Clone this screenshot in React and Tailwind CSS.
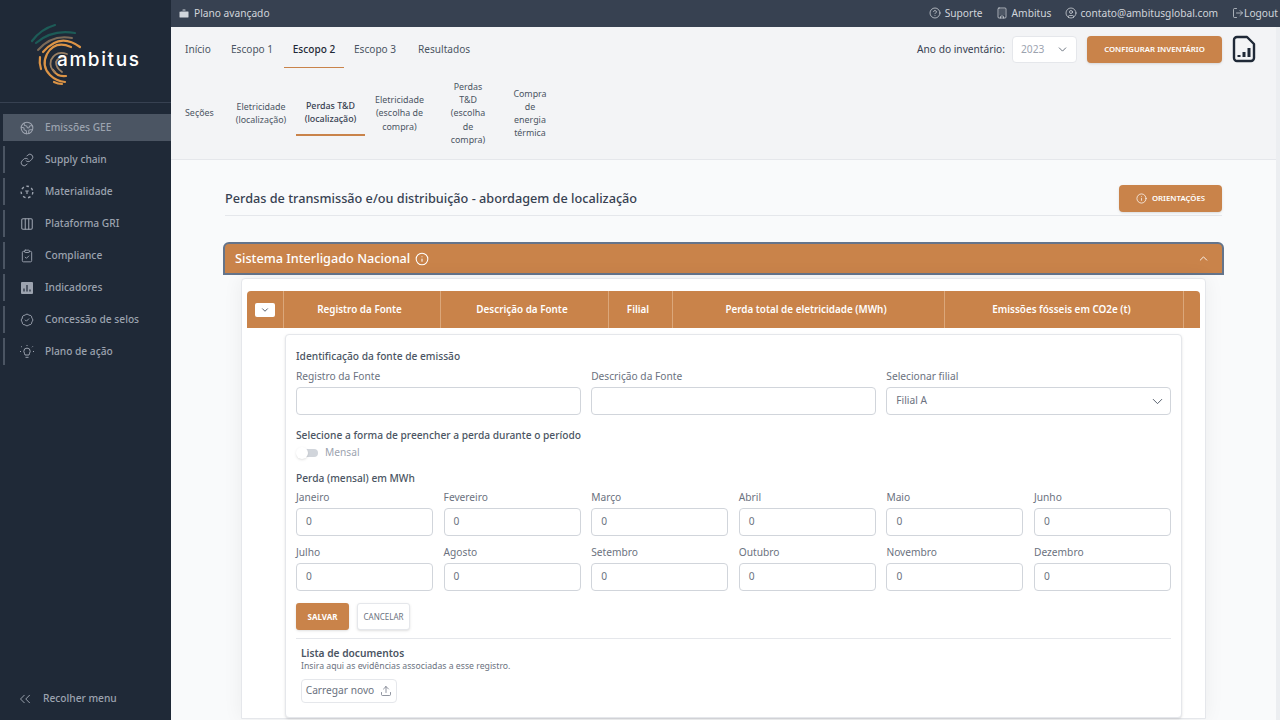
import React from "react";
import { Briefcase, CircleHelp, Building, CircleUser, LogOut, ChevronDown, ChevronUp, Info, Upload, ChevronsLeft, Earth, Link, Columns3, ClipboardCheck, BadgeCheck } from "lucide-react";

const Logo = () => (
  <svg width="90" height="90" viewBox="0 0 90 90" className="shrink-0" fill="none" strokeLinecap="round">
    <g stroke="#1d5b57" strokeWidth="2.2">
      <path d="M32 41 Q41 29 55 25" />
      <path d="M36 43 Q52 29 75 33" />
    </g>
    <g stroke="#7c6a58" strokeWidth="2">
      <path d="M38 50 Q52 34 72 38" />
    </g>
    <g stroke="#dc9446" strokeWidth="2.2">
      <path d="M43 52 Q60 32 80 47" />
      <path d="M71 47 Q55 40 47 54 Q41 66 50 75 Q56 81 65 82" />
      <path d="M40 57 Q39 63 41 69" />
      <path d="M54 82 Q58 84 62 84" />
      <path d="M66 76 Q57 77 53 70" />
    </g>
    <g stroke="#9a8064" strokeWidth="1.8">
      <path d="M67 54 Q56 50 51 60 Q49 68 55 72" />
      <path d="M62 72 Q56 68 56 62 Q58 57 64 57" />
    </g>
  </svg>
);

const Materialidade = () => (
  <svg width="14" height="14" viewBox="0 0 14 14" fill="none" stroke="#9ca3af" strokeWidth="1.4">
    <circle cx="7" cy="7" r="5.8" strokeDasharray="2.6 2.6" />
    <path d="M5.2 6h3.6M7 6v3" strokeWidth="1.2" />
  </svg>
);
const Indicadores = () => (
  <svg width="14" height="14" viewBox="0 0 14 14">
    <rect x="1" y="1" width="12" height="12" rx="1" fill="#9ca3af" />
    <path d="M4 7.5v3M7 4v6.5M10 8.5v2" stroke="#1f2937" strokeWidth="1.2" />
  </svg>
);
const Plano = () => (
  <svg width="14" height="14" viewBox="0 0 14 14" fill="none" stroke="#9ca3af" strokeWidth="1">
    <path d="M5 10 C5 8.5 3.8 8 3.8 6.3 A3.2 3.2 0 0 1 10.2 6.3 C10.2 8 9 8.5 9 10 Z" />
    <path d="M5.5 12.3h3M7 1V0M2 2.2l-.8-.8M12 2.2l.8-.8M1 6.5H0M13 6.5h1" />
  </svg>
);
const FileChart = () => (
  <svg width="24" height="28" viewBox="0 0 24 28" fill="none" className="shrink-0">
    <path d="M5 2 H15 L22 9 V23 A3 3 0 0 1 19 26 H5 A3 3 0 0 1 2 23 V5 A3 3 0 0 1 5 2 Z" stroke="#1f2937" strokeWidth="2.4" strokeLinejoin="round" />
    <path d="M7 22v-2M12 22v-5M17 22v-9" stroke="#1f2937" strokeWidth="3" />
  </svg>
);

const icon = "w-[14px] h-[14px] text-[#9ca3af]";
const nav = [
  ["Emissões GEE", <Earth className={icon} strokeWidth={1.8} />, true],
  ["Supply chain", <Link className={icon} strokeWidth={1.6} />],
  ["Materialidade", <Materialidade />],
  ["Plataforma GRI", <Columns3 className={icon} strokeWidth={1.8} />],
  ["Compliance", <ClipboardCheck className={icon} strokeWidth={1.6} />],
  ["Indicadores", <Indicadores />],
  ["Concessão de selos", <BadgeCheck className={icon} strokeWidth={1.6} />],
  ["Plano de ação", <Plano />],
];

const Sidebar = () => (
  <aside className="w-[171px] h-full shrink-0 bg-[#1f2937] flex flex-col">
    <div className="h-[103px] shrink-0 border-b border-[#374151] relative flex items-start">
      <Logo />
      <span className="absolute left-[57px] top-[47px] text-[19px] leading-[26px] text-white font-['Inter',sans-serif] font-medium tracking-[1.6px]">ambitus</span>
    </div>
    <nav className="flex flex-col gap-[5px] pt-[11px] pl-[3px]">
      {nav.map(([t, ic, active]) => (
        <div key={t} className={`h-[27px] flex items-center border-l-2 border-[#4b5563] pl-[15px] gap-[11px] ${active ? "bg-[#4b5563]" : ""}`}>
          <span className="w-[14px] h-[14px] flex items-center justify-center">{ic}</span>
          <span className="text-[10.2px] font-medium text-[#9ca3af]">{t}</span>
        </div>
      ))}
    </nav>
    <div className="mt-auto h-[42px] flex items-center pl-[16px] gap-[9px]">
      <ChevronsLeft className="w-[18px] h-[18px] text-[#9ca3af]" strokeWidth={1.3} />
      <span className="text-[10.2px] font-medium text-[#9ca3af]">Recolher menu</span>
    </div>
  </aside>
);

const TopBar = () => (
  <header className="h-[27px] shrink-0 bg-[#374151] flex items-center pl-[7px] pr-[2px] text-[10.2px] text-[#d1d5db]">
    <Briefcase className="w-[12px] h-[12px] fill-[#d1d5db] text-[#374151]" />
    <span className="ml-[4px]">Plano avançado</span>
    <div className="ml-auto flex items-center">
      <CircleHelp className="w-[12px] h-[12px]" strokeWidth={1.5} />
      <span className="ml-[4px]">Suporte</span>
      <Building className="w-[12px] h-[12px] ml-[13px]" strokeWidth={1.5} />
      <span className="ml-[4px]">Ambitus</span>
      <CircleUser className="w-[12px] h-[12px] ml-[14px]" strokeWidth={1.5} />
      <span className="ml-[3px]">contato@ambitusglobal.com</span>
      <LogOut className="w-[12px] h-[12px] ml-[14px]" strokeWidth={1.5} />
      <span>Logout</span>
    </div>
  </header>
);

const SubHeader = () => (
  <div className="h-[133px] shrink-0 bg-[#f3f4f6] border-b border-[#e5e7eb] pl-[14px] pr-[54px] flex flex-col">
    <div className="h-[41px] flex items-start shrink-0">
      <div className="flex items-start text-[10.1px] text-[#4b5563]">
        <span className="pt-[15px] w-[46px]">Início</span>
        <span className="pt-[15px] w-[53px]">Escopo 1</span>
        <span className="pt-[15px] w-[60px] h-[41px] border-b border-b-[#c9834a] font-medium text-[#1f2937] whitespace-nowrap text-center">Escopo 2</span>
        <span className="pt-[15px] pl-[10px] w-[74px]">Escopo 3</span>
        <span className="pt-[15px]">Resultados</span>
      </div>
      <div className="ml-auto flex items-center pt-[9px] text-[10.2px] text-[#374151]">
        <span>Ano do inventário:</span>
        <div className="ml-[7px] w-[65px] h-[27px] bg-white border border-[#e5e7eb] rounded-[4px] flex items-center pl-[8px] pr-[7px] text-[#9ca3af]">
          2023
          <ChevronDown className="ml-auto w-[13px] h-[13px] text-[#4b5563]" strokeWidth={1.5} />
        </div>
        <button className="ml-[10px] w-[135px] h-[27px] bg-[#c9834a] rounded-[4px] shadow-sm text-white text-[7.8px] font-semibold">CONFIGURAR INVENTÁRIO</button>
      </div>
      <span className="-mr-[34px] ml-[10px] mt-[8px]"><FileChart /></span>
    </div>
    <div className="flex items-center h-[90px] text-center text-[8.9px] leading-[13.2px] text-[#4b5563]">
      <span className="w-[38px] text-left">Seções</span>
      <span className="w-[73px] pl-[3px]">Eletricidade (localização)</span>
      <div className="w-[69px] h-[46px] pt-[9px] border-b-2 border-b-[#c9834a] font-medium text-[#374151]">Perdas T&amp;D (localização)</div>
      <span className="w-[69px] px-[5px]">Eletricidade (escolha de compra)</span>
      <span className="w-[40px] ml-[14px]">Perdas T&amp;D (escolha de compra)</span>
      <span className="w-[40px] ml-[22px]">Compra de energia térmica</span>
    </div>
  </div>
);

const Field = ({ label, value = "" }) => (
  <div className="flex flex-col">
    <label className="text-[10.2px] leading-[14px] text-[#6b7280]">{label}</label>
    <div className="mt-[4px] h-[28px] bg-white border border-[#d1d5db] rounded-[4px] flex items-center px-[9px] text-[10.2px] text-[#6b7280]">{value}</div>
  </div>
);

const months = ["Janeiro", "Fevereiro", "Março", "Abril", "Maio", "Junho", "Julho", "Agosto", "Setembro", "Outubro", "Novembro", "Dezembro"];

const cols = [["Registro da Fonte", "w-[157px]"], ["Descrição da Fonte", "w-[168px]"], ["Filial", "w-[64px]"], ["Perda total de eletricidade (MWh)", "w-[272px]"], ["Emissões fósseis em CO2e (t)", "w-[239px]"]];

const Form = () => (
  <div className="ml-[38px] mr-[18px] mt-[6px] bg-white border border-[#e5e7eb] rounded-[4px] pt-[14px] px-[10px] shadow-sm">
    <p className="text-[10.2px] leading-[14px] font-medium text-[#4b5563]">Identificação da fonte de emissão</p>
    <div className="grid grid-cols-3 gap-[10.5px] mt-[6px]">
      <Field label="Registro da Fonte" />
      <Field label="Descrição da Fonte" />
      <div className="flex flex-col">
        <label className="text-[10.2px] leading-[14px] text-[#6b7280]">Selecionar filial</label>
        <div className="mt-[4px] h-[28px] bg-white border border-[#d1d5db] rounded-[4px] flex items-center px-[9px] text-[10.2px] text-[#6b7280]">
          Filial A
          <ChevronDown className="ml-auto -mr-[5px] w-[17px] h-[17px] text-[#4b5563]" strokeWidth={1.3} />
        </div>
      </div>
    </div>
    <p className="mt-[13px] text-[10.2px] leading-[14px] font-medium text-[#4b5563]">Selecione a forma de preencher a perda durante o período</p>
    <div className="flex items-center h-[14px] mt-[4px]">
      <div className="relative w-[20px] h-[8px] rounded-full bg-[#d1d5db] ml-[2px]">
        <span className="absolute left-[-2px] top-[-2px] w-[12px] h-[12px] rounded-full bg-white shadow" />
      </div>
      <span className="ml-[7px] text-[10.2px] text-[#9ca3af]">Mensal</span>
    </div>
    <p className="mt-[11px] text-[10.2px] leading-[14px] font-medium text-[#4b5563]">Perda (mensal) em MWh</p>
    <div className="grid grid-cols-6 gap-x-[10.6px] gap-y-[9px] mt-[5px]">
      {months.map((m) => <Field key={m} label={m} value="0" />)}
    </div>
    <div className="flex items-center gap-[8px] mt-[12px]">
      <button className="w-[53px] h-[27px] rounded-[3px] bg-[#c9834a] text-white text-[8px] font-bold shadow">SALVAR</button>
      <button className="w-[53px] h-[27px] rounded-[3px] bg-white border border-[#e5e7eb] text-[#6b7280] text-[8px] shadow-sm">CANCELAR</button>
    </div>
    <div className="mt-[8px] border-t border-[#e5e7eb] pl-[5px] pt-[7px] pb-[14px]">
      <p className="text-[10.2px] leading-[14px] font-semibold text-[#4b5563]">Lista de documentos</p>
      <p className="text-[8.7px] leading-[13px] text-[#6b7280]">Insira aqui as evidências associadas a esse registro.</p>
      <button className="mt-[6px] w-[96px] h-[24px] border border-[#e5e7eb] rounded-[4px] flex items-center justify-center gap-[6px] text-[10.2px] text-[#6b7280]">
        Carregar novo <Upload className="w-[12px] h-[12px]" strokeWidth={1.5} />
      </button>
    </div>
  </div>
);

const Accordion = () => (
  <div className="mt-[26px] -mx-[2px]">
    <div className="h-[33px] bg-[#c9834a] border-2 border-[#64748b] rounded-t-[6px] flex items-center pl-[10px] pr-[12px] text-white">
      <span className="text-[12.7px] font-medium">Sistema Interligado Nacional</span>
      <Info className="w-[14px] h-[14px] ml-[5px]" strokeWidth={1.8} />
      <ChevronUp className="ml-auto w-[13px] h-[13px]" strokeWidth={1.6} />
    </div>
    <div className="mx-[18px] mt-[3px] bg-white border border-[#e5e7eb] rounded-t-[4px] pt-[12px] px-[5px] shadow-[0_0_20px_rgba(0,0,0,0.06)]">
      <div className="h-[37px] bg-[#c9834a] rounded-t-[4px] flex text-white text-[9.9px] font-semibold">
        <div className="w-[37px] flex items-center justify-center border-r border-[#dba77a]">
          <span className="w-[20px] h-[14px] bg-white rounded-[2px] flex items-center justify-center">
            <ChevronDown className="w-[10px] h-[10px] text-[#374151]" strokeWidth={2} />
          </span>
        </div>
        {cols.map(([t, w]) => (
          <div key={t} className={`${w} shrink-0 flex items-center justify-center pr-[5px] border-r border-[#dba77a]`}>{t}</div>
        ))}
      </div>
      <Form />
    </div>
  </div>
);

export default function App() {
  return (
    <div className="w-[1280px] h-[720px] overflow-hidden flex font-['Noto_Sans',sans-serif] bg-[#f9fafb]">
      <Sidebar />
      <main className="flex-1 h-full flex flex-col min-w-0">
        <TopBar />
        <div className="flex-1 min-h-0 flex flex-col border-r-4 border-[#eceef1]">
          <SubHeader />
          <div className="flex-1 pl-[54px] pr-[54px] pt-[25px] min-h-0">
            <div className="flex items-center justify-between h-[31px] border-b border-[#e5e7eb] pb-[3px]">
              <h1 className="text-[12.7px] font-medium text-[#374151]">Perdas de transmissão e/ou distribuição - abordagem de localização</h1>
              <button className="w-[103px] h-[27px] bg-[#c9834a] rounded-[4px] shadow-sm flex items-center justify-center gap-[5px] text-white text-[7.8px] font-semibold">
                <Info className="w-[11px] h-[11px]" strokeWidth={1.6} /> ORIENTAÇÕES
              </button>
            </div>
            <Accordion />
          </div>
        </div>
      </main>
    </div>
  );
}
